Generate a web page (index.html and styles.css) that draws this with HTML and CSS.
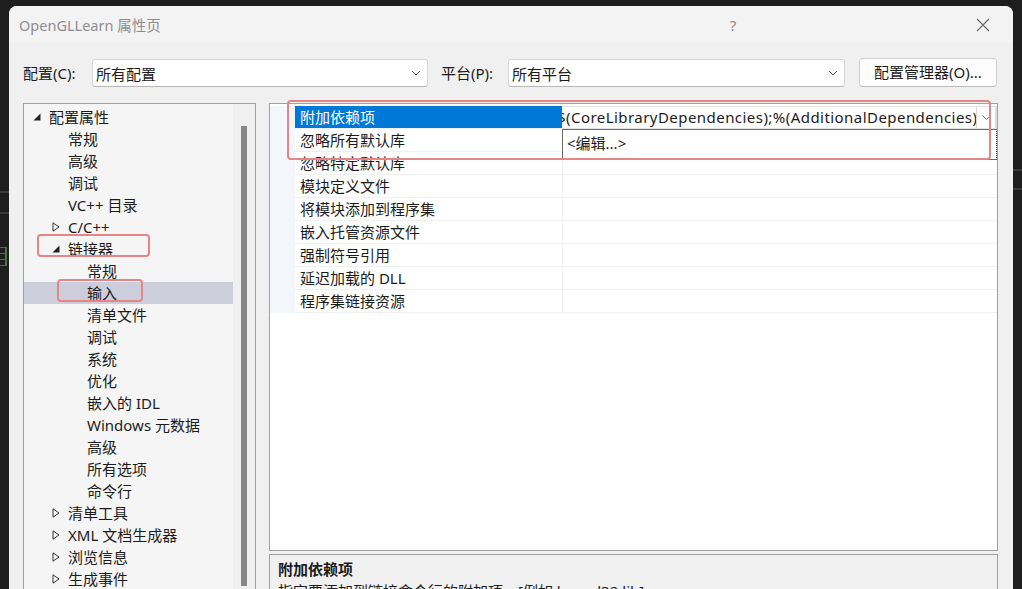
FILE: index.html
```html
<!DOCTYPE html>
<html lang="zh-CN">
<head>
    <meta charset="UTF-8">
    <title>OpenGLLearn 属性页</title>
    <link rel="stylesheet" href="styles.css">
</head>
<body>
    <!-- IDE behind the dialog -->
    <div class="edge edge-left">
        <div class="edge-line first"></div>
        <div class="edge-line"></div>
        <div class="edge-code">
            <div class="code-bar"></div>
            <div class="code-bar"></div>
            <div class="code-bar"></div>
            <div class="code-bar"></div>
        </div>
    </div>

    <div class="window">
        <!-- Title bar -->
        <div class="titlebar">
            <span class="title">OpenGLLearn 属性页</span>
            <span class="help">?</span>
            <span class="close">
                <svg width="14" height="14" viewBox="0 0 14 14"><path d="M1 1 L13 13 M13 1 L1 13" stroke="#6b6b6b" stroke-width="1.1" fill="none"/></svg>
            </span>
        </div>

        <!-- Configuration / platform -->
        <div class="toolbar">
            <span class="label">配置(C):</span>
            <div class="select cfg">
                <span>所有配置</span>
                <svg class="chev" width="10" height="6" viewBox="0 0 10 6"><path d="M1 1 L5 5 L9 1" stroke="#555" stroke-width="1" fill="none"/></svg>
            </div>
            <span class="label plat-label">平台(P):</span>
            <div class="select plat">
                <span>所有平台</span>
                <svg class="chev" width="10" height="6" viewBox="0 0 10 6"><path d="M1 1 L5 5 L9 1" stroke="#555" stroke-width="1" fill="none"/></svg>
            </div>
            <div class="btn">配置管理器(O)...</div>
        </div>

        <div class="main">
            <!-- Tree -->
            <div class="tree">
                <div class="tree-list">
                    <div class="node lv0"><svg class="arrow" width="8" height="8" viewBox="0 0 8 8"><polygon points="7.5,0.5 7.5,7.5 0.5,7.5" fill="#222"/></svg>配置属性</div>
                    <div class="node lv1">常规</div>
                    <div class="node lv1">高级</div>
                    <div class="node lv1">调试</div>
                    <div class="node lv1">VC++ 目录</div>
                    <div class="node lv1"><svg class="arrow" width="8" height="10" viewBox="0 0 8 10"><polygon points="1,0.8 7,5 1,9.2" fill="none" stroke="#333" stroke-width="1"/></svg>C/C++</div>
                    <div class="node lv1"><svg class="arrow" width="8" height="8" viewBox="0 0 8 8"><polygon points="7.5,0.5 7.5,7.5 0.5,7.5" fill="#222"/></svg>链接器</div>
                    <div class="node lv2">常规</div>
                    <div class="node lv2 selected">输入</div>
                    <div class="node lv2">清单文件</div>
                    <div class="node lv2">调试</div>
                    <div class="node lv2">系统</div>
                    <div class="node lv2">优化</div>
                    <div class="node lv2">嵌入的 IDL</div>
                    <div class="node lv2">Windows 元数据</div>
                    <div class="node lv2">高级</div>
                    <div class="node lv2">所有选项</div>
                    <div class="node lv2">命令行</div>
                    <div class="node lv1"><svg class="arrow" width="8" height="10" viewBox="0 0 8 10"><polygon points="1,0.8 7,5 1,9.2" fill="none" stroke="#333" stroke-width="1"/></svg>清单工具</div>
                    <div class="node lv1"><svg class="arrow" width="8" height="10" viewBox="0 0 8 10"><polygon points="1,0.8 7,5 1,9.2" fill="none" stroke="#333" stroke-width="1"/></svg>XML 文档生成器</div>
                    <div class="node lv1"><svg class="arrow" width="8" height="10" viewBox="0 0 8 10"><polygon points="1,0.8 7,5 1,9.2" fill="none" stroke="#333" stroke-width="1"/></svg>浏览信息</div>
                    <div class="node lv1"><svg class="arrow" width="8" height="10" viewBox="0 0 8 10"><polygon points="1,0.8 7,5 1,9.2" fill="none" stroke="#333" stroke-width="1"/></svg>生成事件</div>

                    <span class="mark mark-linker"></span>
                    <span class="mark mark-input"></span>
                </div>
                <div class="scroll"><div class="thumb"></div></div>
            </div>

            <!-- Property grid -->
            <div class="right">
                <div class="grid">
                    <div class="row current">
                        <div class="gutter"></div>
                        <div class="name">附加依赖项</div>
                        <div class="value edit">
                            <span class="value-text">$(CoreLibraryDependencies);%(AdditionalDependencies)</span>
                            <span class="drop">
                                <svg width="9" height="5" viewBox="0 0 9 5"><path d="M0.5 0.5 L4.5 4.5 L8.5 0.5" stroke="#777" stroke-width="1" fill="none"/></svg>
                            </span>
                        </div>
                    </div>
                    <div class="row"><div class="gutter"></div><div class="name">忽略所有默认库</div><div class="value"></div></div>
                    <div class="row"><div class="gutter"></div><div class="name">忽略特定默认库</div><div class="value"></div></div>
                    <div class="row"><div class="gutter"></div><div class="name">模块定义文件</div><div class="value"></div></div>
                    <div class="row"><div class="gutter"></div><div class="name">将模块添加到程序集</div><div class="value"></div></div>
                    <div class="row"><div class="gutter"></div><div class="name">嵌入托管资源文件</div><div class="value"></div></div>
                    <div class="row"><div class="gutter"></div><div class="name">强制符号引用</div><div class="value"></div></div>
                    <div class="row"><div class="gutter"></div><div class="name">延迟加载的 DLL</div><div class="value"></div></div>
                    <div class="row"><div class="gutter"></div><div class="name">程序集链接资源</div><div class="value"></div></div>

                    <div class="dropdown">&lt;编辑...&gt;</div>
                    <span class="mark mark-grid"></span>
                </div>

                <div class="desc">
                    <div class="desc-title">附加依赖项</div>
                    <div class="desc-text">指定要添加到链接命令行的附加项。[例如 kernel32.lib]</div>
                </div>
            </div>
        </div>
    </div>

    <div class="edge edge-right">
        <div class="edge-line r1"></div>
        <div class="edge-line r2"></div>
    </div>
</body>
</html>
```

FILE: styles.css
```css
* {
    margin: 0;
    padding: 0;
    box-sizing: border-box;
}
body {
    font-family: "Noto Sans", "Noto Sans CJK SC", sans-serif;
    font-size: 15px;
    color: #1b1b1b;
    background: #1e1e1e;
    display: flex;
    height: 589px;
    overflow: hidden;
}
/* Background strips */
.edge {
    width: 9px;
    flex: none;
}
.edge-line {
    height: 2px;
    background: #3b3b3b;
}
.edge-line.first {
    margin-top: 191px;
}
.edge-left .edge-line + .edge-line {
    margin-top: 19px;
}
.edge-code {
    margin-top: 33px;
    width: 7px;
    border-right: 2px solid #3f7a36;
}
.code-bar {
    height: 1px;
    background: #3f7a36;
    margin-bottom: 5px;
}
.edge-line.r1 {
    margin-top: 169px;
}
.edge-line.r2 {
    margin-top: 17px;
}
/* Dialog */
.window {
    width: 1004px;
    margin-top: 6px;
    background: #f0f0f0;
    border-radius: 8px 8px 0 0;
    display: flex;
    flex-direction: column;
    overflow: hidden;
}
.titlebar {
    flex: none;
    height: 37px;
    background: #f3f3f3;
    display: flex;
    align-items: center;
    padding-left: 10px;
}
.title {
    color: #8e8e8e;
    font-size: 14.5px;
}
.help {
    margin-left: auto;
    width: 60px;
    text-align: center;
    color: #8a8a8a;
    font-size: 15px;
    margin-right: 190px;
}
.close {
    width: 60px;
    display: flex;
    justify-content: center;
}
.toolbar {
    flex: none;
    height: 60px;
    display: flex;
    align-items: flex-start;
    padding: 16px 16px 0 14px;
}
.label {
    line-height: 28px;
    width: 69px;
}
.plat-label {
    width: 67px;
    margin-left: 13px;
}
.select {
    height: 28px;
    background: #fff;
    border: 1px solid #d6d6d6;
    border-bottom-color: #b8b8b8;
    border-radius: 3px;
    display: flex;
    align-items: center;
    padding: 0 5px 0 3px;
}
.select span {
    flex: 1;
}
.select .chev {
    margin-right: 1px;
}
.cfg {
    width: 336px;
}
.plat {
    width: 337px;
}
.btn {
    margin-left: 14px;
    width: 138px;
    height: 29px;
    margin-top: -1px;
    background: #fdfdfd;
    border: 1px solid #d2d2d2;
    border-bottom-color: #bdbdbd;
    border-radius: 4px;
    text-align: center;
    line-height: 27px;
}
.main {
    flex: none;
    display: flex;
    gap: 13px;
    padding: 0 15px 0 14px;
}
/* Tree */
.tree {
    width: 233px;
    border: 1px solid #a0a0a0;
    background: #f5f5f5;
    display: flex;
}
.tree-list {
    flex: 1;
    position: relative;
    padding-top: 2px;
}
.node {
    height: 22px;
    line-height: 22px;
    display: flex;
    align-items: center;
    white-space: nowrap;
}
.node .arrow {
    margin-left: -16px;
    margin-right: 8px;
    flex: none;
}
.lv0 {
    padding-left: 25px;
}
.lv1 {
    padding-left: 44px;
}
.lv2 {
    padding-left: 63px;
}
.node.selected {
    background: #cccedb;
}
.scroll {
    width: 22px;
    background: #f0f0f0;
    padding: 22px 0 0 8px;
}
.thumb {
    width: 6px;
    height: 460px;
    background: #878787;
}
/* Red highlight marks */
.mark {
    position: absolute;
    border: 2px solid #e58585;
    border-radius: 4px;
}
.mark-linker {
    left: 13px;
    top: 130px;
    width: 113px;
    height: 23px;
}
.mark-input {
    left: 33px;
    top: 175px;
    width: 86px;
    height: 23px;
}
.mark-grid {
    left: 17px;
    top: -4px;
    width: 704px;
    height: 60px;
}
/* Property grid */
.right {
    flex: 1;
    display: flex;
    flex-direction: column;
}
.grid {
    height: 448px;
    border: 1px solid #a0a0a0;
    background: #fff;
    position: relative;
    padding-top: 2px;
}
.row {
    display: flex;
    height: 23px;
}
.gutter {
    width: 25px;
    background: #f3f6fb;
}
.name {
    width: 267px;
    padding-left: 5px;
    line-height: 22px;
    border-bottom: 1px solid #f0f0f0;
    white-space: nowrap;
}
.value {
    flex: 1;
    border-bottom: 1px solid #f0f0f0;
    border-left: 1px solid #f0f0f0;
}
.current .name {
    background: #0078d7;
    color: #fff;
}
.value.edit {
    border: 1px solid #e3e3e3;
    border-left: none;
    display: flex;
    overflow: hidden;
    position: relative;
}
.value-text {
    line-height: 21px;
    white-space: nowrap;
    margin-left: -5px;
    letter-spacing: 0.45px;
}
.drop {
    position: absolute;
    right: 0;
    top: -1px;
    width: 20px;
    height: 23px;
    background: #fff;
    border: 1px solid #d8d8d8;
    display: flex;
    align-items: center;
    justify-content: center;
}
.dropdown {
    position: absolute;
    left: 292px;
    top: 25px;
    width: 435px;
    height: 31px;
    background: #fff;
    border: 1px solid #6a6a6a;
    border-right: 1px dotted #333;
    padding-left: 4px;
    line-height: 26px;
}
.desc {
    margin-top: 3px;
    height: 80px;
    border: 1px solid #a0a0a0;
    background: #f0f0f0;
    padding: 3px 8px;
}
.desc-title {
    font-weight: bold;
    line-height: 22px;
}
.desc-text {
    line-height: 22px;
}
```
